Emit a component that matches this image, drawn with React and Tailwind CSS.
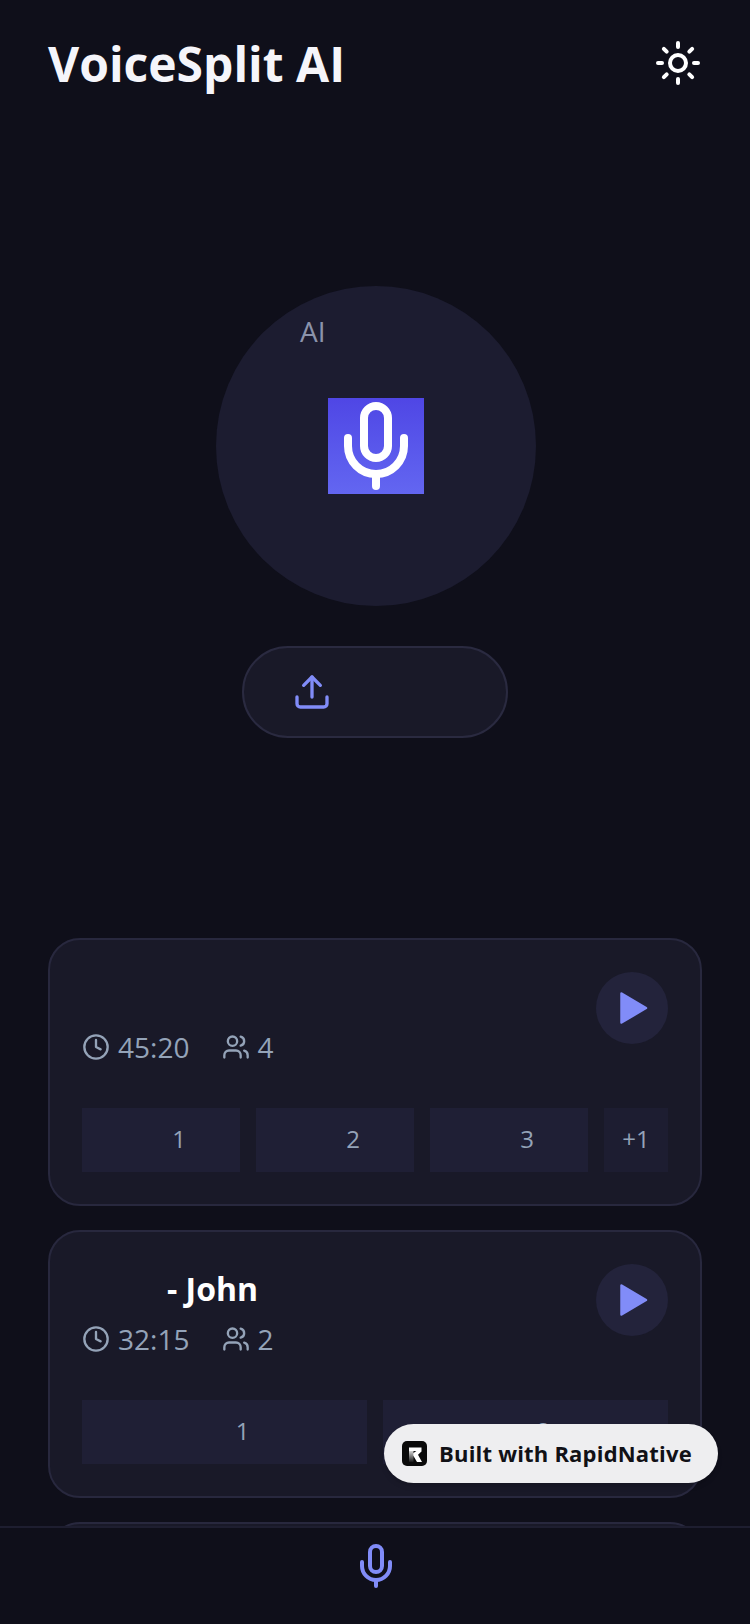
import { Sun, Mic, Upload, Clock, Users } from 'lucide-react';

function PlayButton() {
  return (
    <button className="w-[72px] h-[72px] rounded-full bg-[#23233b] flex items-center justify-center shrink-0">
      <svg width="28" height="36" viewBox="0 0 28 36" className="ml-[3px]">
        <path d="M1.5 3.5 L26 18 L1.5 32.5 Z" fill="#818cf8" stroke="#818cf8" strokeWidth="2.5" strokeLinejoin="round" />
      </svg>
    </button>
  );
}

function Chip({ label, more }) {
  if (more) {
    return (
      <div className="w-16 h-16 pb-0.5 bg-[#1d1d31] flex items-center justify-center text-[24px] text-[#94a3b8]">
        {label}
      </div>
    );
  }
  return (
    <div className="flex-1 h-16 pb-0.5 bg-[#1f1f35] flex items-center justify-center pl-9 text-[24px] text-[#94a3b8]">
      {label}
    </div>
  );
}

function RecordingCard({ title, duration, speakers, chips }) {
  return (
    <div className="h-[268px] shrink-0 rounded-[32px] border-2 border-[#28283e] bg-[#191928] p-8">
      <div className="flex justify-between">
        <div>
          <div className="h-[50px] mb-0.5 flex items-center pl-[85px] text-[32px] font-bold text-white">{title}</div>
          <div className="mt-[6px] flex items-center gap-[33px] text-[28px] leading-[38px] text-[#94a3b8]">
            <div className="flex items-center gap-2">
              <Clock size={28} />
              <span>{duration}</span>
            </div>
            <div className="flex items-center gap-[7px]">
              <Users size={28} />
              <span>{speakers}</span>
            </div>
          </div>
        </div>
        <PlayButton />
      </div>
      <div className="mt-[42px] flex gap-4">
        {chips.map((c) => (
          <Chip key={c} label={c} more={c.startsWith('+')} />
        ))}
      </div>
    </div>
  );
}

export default function App() {
  return (
    <div className="relative w-[750px] h-[1624px] overflow-hidden flex flex-col bg-[#0f0f1a] font-['Open_Sans',sans-serif]">
      <div className="flex-1 overflow-hidden">
        {/* Header */}
        <div className="pt-[39px] px-12 flex items-center justify-between">
          <h1 className="h-12 text-[48px] leading-[50px] font-bold text-[#f5f5fa]">VoiceSplit AI</h1>
          <Sun size={48} className="text-white" />
        </div>

        {/* Record area */}
        <div className="mt-[199px] flex flex-col items-center">
          <div className="ml-0.5 w-80 h-80 rounded-full bg-[#1c1c30] flex flex-col items-center pt-[26px]">
            <span className="self-start ml-[84px] text-[28px] leading-[38px] text-[#8b93ab]">AI</span>
            <div className="mt-[48px] w-24 h-24 bg-gradient-to-b from-[#4f46e5] to-[#6366f1]">
              <Mic size={96} className="text-white" />
            </div>
          </div>
          <div className="mt-10 w-[266px] h-[92px] rounded-full border-2 border-[#2a2a40] bg-[#191928] flex items-center pl-12">
            <Upload size={40} className="text-[#818cf8]" />
          </div>
        </div>

        {/* Recordings */}
        <div className="mt-[200px] px-12 flex flex-col gap-6">
          <RecordingCard title="" duration="45:20" speakers="4" chips={['1', '2', '3', '+1']} />
          <RecordingCard title="- John" duration="32:15" speakers="2" chips={['1', '2']} />
          <div className="h-[268px] shrink-0 rounded-[32px] border-2 border-[#28283e] bg-[#191928]" />
        </div>
      </div>

      {/* Tab bar */}
      <div className="h-[98px] shrink-0 border-t-2 border-[#1e1e30] bg-[#0f0f1a] flex justify-center pt-[14px] pl-0.5">
        <Mic size={48} className="text-[#818cf8]" />
      </div>

      {/* Badge */}
      <div className="absolute right-8 bottom-[141px] w-[334px] h-[59px] rounded-full bg-[#eeeef0] shadow-md flex items-center pl-[18px] gap-3">
        <svg width="25" height="25" viewBox="0 0 25 25">
          <defs>
            <linearGradient id="stem" x1="0" y1="0" x2="0" y2="1">
              <stop offset="0" stopColor="#d4d4d4" />
              <stop offset="1" stopColor="#1a1a1a" />
            </linearGradient>
          </defs>
          <rect width="25" height="25" rx="5" fill="#0a0a0a" />
          <rect x="7" y="10" width="4.5" height="11" fill="url(#stem)" />
          <path d="M7 6.5h12.5v4l-3.5 3.2 4 7.3h-5l-3.8-6.5v-2.2l3.2-2.3H7z" fill="#ffffff" />
        </svg>
        <span className="text-[22px] font-bold tracking-[0.2px] text-[#111116]">Built with RapidNative</span>
      </div>
    </div>
  );
}
